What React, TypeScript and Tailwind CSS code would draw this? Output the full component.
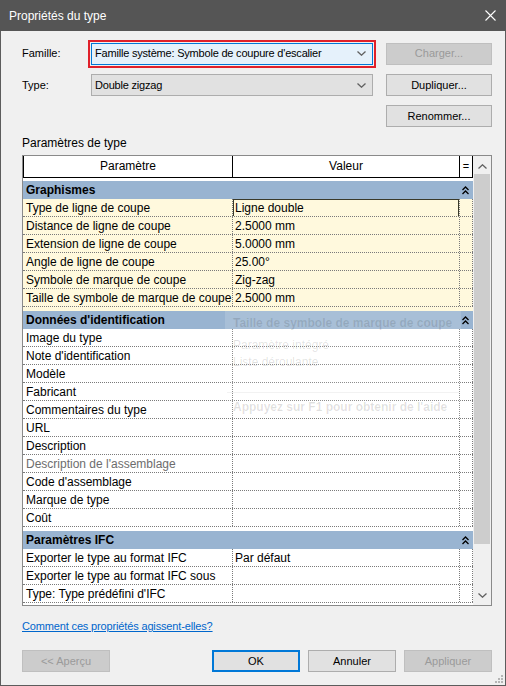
import React from 'react';

type Row = { name: string; value?: string; selected?: boolean; disabled?: boolean };
type Section = { title: string; bg: string; rows: Row[] };

const sections: Section[] = [
  {
    title: 'Graphismes',
    bg: 'bg-[#fff9dd]',
    rows: [
      { name: 'Type de ligne de coupe', value: 'Ligne double', selected: true },
      { name: 'Distance de ligne de coupe', value: '2.5000 mm' },
      { name: 'Extension de ligne de coupe', value: '5.0000 mm' },
      { name: 'Angle de ligne de coupe', value: '25.00°' },
      { name: 'Symbole de marque de coupe', value: 'Zig-zag' },
      { name: 'Taille de symbole de marque de coupe', value: '2.5000 mm' },
    ],
  },
  {
    title: "Données d'identification",
    bg: 'bg-white',
    rows: [
      { name: 'Image du type' },
      { name: "Note d'identification" },
      { name: 'Modèle' },
      { name: 'Fabricant' },
      { name: 'Commentaires du type' },
      { name: 'URL' },
      { name: 'Description' },
      { name: "Description de l'assemblage", disabled: true },
      { name: "Code d'assemblage" },
      { name: 'Marque de type' },
      { name: 'Coût' },
    ],
  },
  {
    title: 'Paramètres IFC',
    bg: 'bg-white',
    rows: [
      { name: 'Exporter le type au format IFC', value: 'Par défaut' },
      { name: 'Exporter le type au format IFC sous' },
      { name: "Type: Type prédéfini d'IFC" },
    ],
  },
];

const Chevron = ({ up = false }: { up?: boolean }) => (
  <svg width="9" height="5" viewBox="0 0 9 5" className="text-[#606060]">
    <path d={up ? 'M0.5 4.5 L4.5 0.8 L8.5 4.5' : 'M0.5 0.5 L4.5 4.2 L8.5 0.5'} fill="none" stroke="currentColor" strokeWidth="1.3" />
  </svg>
);

const DoubleUp = () => (
  <svg width="7" height="9" viewBox="0 0 7 9">
    <path d="M0.5 4 L3.5 1 L6.5 4 M0.5 8 L3.5 5 L6.5 8" fill="none" stroke="#000" strokeWidth="1.3" />
  </svg>
);

const Button = ({ label, disabled = false, w = 'w-[106px]', primary = false }: { label: string; disabled?: boolean; w?: string; primary?: boolean }) => (
  <div
    className={`${w} h-[22px] flex items-center justify-center text-[11px] ${
      disabled
        ? 'bg-[#cccccc] border border-[#bfbfbf] text-[#9a9a9a]'
        : primary
        ? 'bg-[#e1e1e1] border-2 border-[#0078d7] text-black'
        : 'bg-[#e1e1e1] border border-[#adadad] text-black'
    }`}
  >
    {label}
  </div>
);

const Combo = ({ text, focused = false }: { text: string; focused?: boolean }) => (
  <div
    className={`w-[282px] h-[22px] flex items-center justify-between pl-[3px] pr-[6px] text-[11px] tracking-[-0.2px] text-black ${
      focused ? 'bg-[#e5f1fb] border border-[#0078d7]' : 'bg-[#e1e1e1] border border-[#adadad]'
    }`}
  >
    <span className="whitespace-nowrap">{text}</span>
    <Chevron />
  </div>
);

const DataRow = ({ row }: { row: Row }) => (
  <div className="flex h-[18px] border-b border-dotted border-[#7a7a7a] text-[12px] leading-[19px] overflow-hidden">
    <div className={`w-[210px] pl-[3px] border-r border-dotted border-[#7a7a7a] whitespace-nowrap overflow-hidden ${row.disabled ? 'text-[#6d6d6d]' : 'text-black'}`}>
      {row.name}
    </div>
    <div className="w-[227px] border-r border-dotted border-[#7a7a7a] relative">
      {row.selected ? (
        <div className="absolute inset-x-0 top-0 h-[18px] border border-[#3a3a2a] pl-[1px] leading-[17px]">{row.value}</div>
      ) : (
        <div className="pl-[2px] whitespace-nowrap">{row.value}</div>
      )}
    </div>
    <div className="w-[13px] border-r border-dotted border-[#7a7a7a]" />
  </div>
);

export default function App() {
  return (
    <div className="w-[506px] h-[686px] flex flex-col font-['Liberation_Sans',Arial,sans-serif] text-[12px] text-black select-none">
      {/* title bar */}
      <div className="h-[31px] bg-[#555555] flex items-center justify-between pl-[9px] pr-[10px] text-white text-[12px]">
        <span>Propriétés du type</span>
        <svg width="11" height="11" viewBox="0 0 11 11">
          <path d="M0.5 0.5 L10.5 10.5 M10.5 0.5 L0.5 10.5" stroke="#fff" strokeWidth="1.1" />
        </svg>
      </div>

      {/* body */}
      <div className="flex-1 relative flex flex-col bg-[#f0f0f0] border-x border-b border-[#5c5c5c] pl-[21px] pr-[13px] pt-[9px]">
        <div className="flex items-center h-[27px] text-[11px]">
          <div className="w-[66px]">Famille:</div>
          <div className="border-2 border-[#e0202a] p-[1px]">
            <Combo text="Famille système: Symbole de coupure d'escalier" focused />
          </div>
          <div className="ml-auto">
            <Button label="Charger..." disabled />
          </div>
        </div>

        <div className="flex items-center h-[22px] mt-[7px] text-[11px]">
          <div className="w-[69px]">Type:</div>
          <Combo text="Double zigzag" />
          <div className="ml-auto">
            <Button label="Dupliquer..." />
          </div>
        </div>

        <div className="flex justify-end h-[22px] mt-[9px]">
          <Button label="Renommer..." />
        </div>

        <div className="mt-[8px] h-[16px] leading-[16px]">Paramètres de type</div>

        {/* property grid */}
        <div className="relative mt-[4px] w-[470px] h-[451px] border border-[#8a8a8a] bg-white flex">
          <div className="w-[450px] flex flex-col overflow-hidden">
            <div className="flex h-[22px] border-b border-black leading-[21px] bg-white">
              <div className="w-[210px] border-l border-r border-black text-center">Paramètre</div>
              <div className="w-[227px] border-r border-black text-center">Valeur</div>
              <div className="w-[13px] border-r border-black flex items-center justify-center text-[11px]">=</div>
            </div>
            <div className="h-[3px] bg-white" />
            {sections.map((s, i) => (
              <div key={s.title} className={s.bg}>
                <div className="h-[18px] bg-[#99b4d1] flex items-center justify-between pl-[3px] pr-[4px] font-bold">
                  <span>{s.title}</span>
                  <DoubleUp />
                </div>
                {s.rows.map((r) => (
                  <DataRow key={r.name} row={r} />
                ))}
                {i < sections.length - 1 && <div className="h-[4px]" />}
              </div>
            ))}
          </div>

          {/* scrollbar */}
          <div className="w-[18px] bg-[#f0f0f0] flex flex-col items-center">
            <div className="h-[17px] flex items-center justify-center pt-[3px]">
              <Chevron up />
            </div>
            <div className="w-[16px] h-[370px] bg-[#cdcdcd] mt-[1px]" />
            <div className="flex-1" />
            <div className="h-[17px] flex items-center justify-center pb-[3px]">
              <Chevron />
            </div>
          </div>

          {/* fading tooltip */}
          <div className="absolute left-[202px] top-[155px] w-[236px] h-[107px] bg-white/[0.15] text-black/[0.12] pt-[4px]">
            <div className="pl-[8px] font-bold h-[17px] leading-[17px]">Taille de symbole de marque de coupe</div>
            <div className="pl-[8px] mt-[5px] leading-[17px]">Paramètre intégré</div>
            <div className="pl-[8px] leading-[17px]">Liste déroulante</div>
            <div className="mx-[2px] mt-[21px] border-t border-black/[0.05]" />
            <div className="pl-[8px] mt-[6px] font-bold leading-[17px]">Appuyez sur F1 pour obtenir de l'aide</div>
          </div>
        </div>

        <div className="mt-[12px] h-[16px] leading-[16px] text-[11px] tracking-[-0.15px]">
          <span className="text-[#0066cc] underline">Comment ces propriétés agissent-elles?</span>
        </div>

        <div className="mt-[16px] flex">
          <Button label="<< Aperçu" disabled w="w-[88px]" />
          <div className="ml-auto flex gap-[8px]">
            <Button label="OK" primary w="w-[88px]" />
            <Button label="Annuler" w="w-[88px]" />
            <Button label="Appliquer" disabled w="w-[88px]" />
          </div>
        </div>

        {/* resize grip */}
        <svg className="absolute right-[2px] bottom-[2px]" width="9" height="9" viewBox="0 0 9 9">
          <rect x="7" y="1" width="2" height="2" fill="#b5b5b5" />
          <rect x="4" y="4" width="2" height="2" fill="#b5b5b5" />
          <rect x="7" y="4" width="2" height="2" fill="#b5b5b5" />
          <rect x="1" y="7" width="2" height="2" fill="#b5b5b5" />
          <rect x="4" y="7" width="2" height="2" fill="#b5b5b5" />
          <rect x="7" y="7" width="2" height="2" fill="#b5b5b5" />
        </svg>
      </div>
    </div>
  );
}
